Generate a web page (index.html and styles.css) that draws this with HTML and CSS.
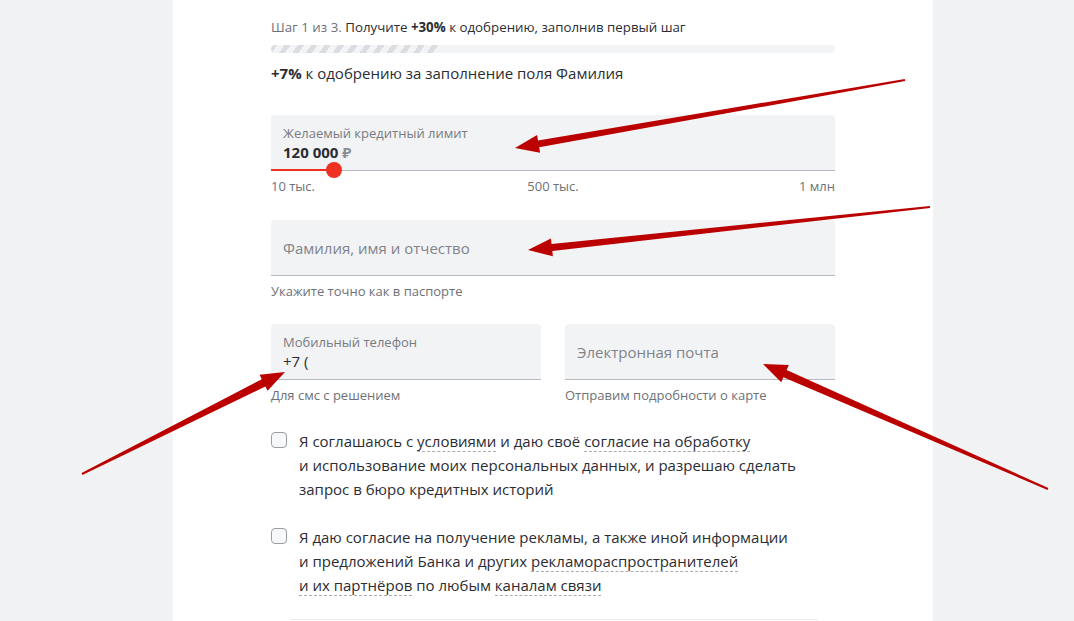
FILE: index.html
```html
<!DOCTYPE html>
<html lang="ru">
<head>
<meta charset="utf-8">
<title>Заявка</title>
<link rel="stylesheet" href="styles.css">
</head>
<body>
<div class="page">
  <main class="panel">
    <p class="step"><span class="muted">Шаг 1 из 3.</span> Получите <b>+30%</b> к одобрению, заполнив первый шаг</p>
    <div class="progress"><div class="progress-fill"></div></div>
    <p class="bonus"><b>+7%</b> к одобрению за заполнение поля Фамилия</p>

    <div class="field field-limit">
      <div class="label">Желаемый кредитный лимит</div>
      <div class="value strong">120 000 <span class="rub">₽</span></div>
      <div class="slider"><div class="slider-fill"></div><div class="thumb"></div></div>
    </div>
    <div class="scale"><span>10 тыс.</span><span class="mid">500 тыс.</span><span class="end">1 млн</span></div>

    <div class="field field-empty field-name">
      <div class="placeholder">Фамилия, имя и отчество</div>
    </div>
    <div class="hint">Укажите точно как в паспорте</div>

    <div class="row">
      <div class="col">
        <div class="field">
          <div class="label">Мобильный телефон</div>
          <div class="value">+7 (</div>
        </div>
        <div class="hint">Для смс с решением</div>
      </div>
      <div class="col">
        <div class="field field-empty">
          <div class="placeholder">Электронная почта</div>
        </div>
        <div class="hint">Отправим подробности о карте</div>
      </div>
    </div>

    <div class="check">
      <span class="box"></span>
      <p>Я соглашаюсь с <span class="link">условиями</span> и даю своё <span class="link">согласие на обработку</span><br>и использование моих персональных данных, и разрешаю сделать<br>запрос в бюро кредитных историй</p>
    </div>
    <div class="check">
      <span class="box"></span>
      <p>Я даю согласие на получение рекламы, а также иной информации<br>и предложений Банка и других <span class="link">рекламораспространителей</span><br><span class="link">и их партнёров</span> по любым <span class="link">каналам связи</span></p>
    </div>
    <div class="divider"></div>
  </main>
</div>

<svg class="arrows" width="1074" height="621" viewBox="0 0 1074 621" aria-hidden="true">
  <g fill="#bb0000">
    <polygon points="904.8,79 538,140.4 537.1,135 515,148 540.1,152.8 539.2,147.3 905.2,81"/>
    <polygon points="929.9,206 551.5,243.9 550.9,238.5 528,250 552.9,256.3 552.3,250.9 930.1,208"/>
    <polygon points="82.4,474.9 265.4,386.4 267.6,390.8 285,372 259.6,374.8 261.8,379.2 81.6,473.1"/>
    <polygon points="1048.4,488.1 786.6,369.9 788.8,364.9 763,364 781.2,382.3 783.4,377.3 1047.6,489.9"/>
  </g>
</svg>
</body>
</html>
```

FILE: styles.css
```css
* { box-sizing: border-box; }
html, body { margin: 0; padding: 0; }
body {
  background: #f1f2f4;
  font-family: "Open Sans", "Noto Sans", "DejaVu Sans", sans-serif;
  color: #2b2d33;
  height: 621px;
  overflow: hidden;
}
.page {
  display: flex;
  padding-left: 173px;
}
.panel {
  width: 760px;
  min-height: 621px;
  background: #ffffff;
  padding: 18px 98px 0 98px;
}
p { margin: 0; }
.step {
  font-size: 13.3px;
  line-height: 18px;
  color: #2b2d33;
}
.step b { font-weight: 700; }
.muted { color: #6e7178; }
.progress {
  margin-top: 9px;
  height: 8px;
  border-radius: 4px;
  background: #f3f4f6;
  overflow: hidden;
}
.progress-fill {
  width: 30%;
  height: 100%;
  border-radius: 4px;
  background: repeating-linear-gradient(-55deg, #f3f4f6 0 6px, #dcdde0 6px 11px);
}
.bonus {
  margin-top: 10px;
  font-size: 15px;
  line-height: 20px;
}
.bonus b { font-weight: 700; }

.field {
  position: relative;
  height: 56px;
  background: #f2f3f5;
  border-radius: 4px 4px 0 0;
  border-bottom: 1px solid #b6b9bf;
  padding: 9px 12px 0 12px;
}
.field-limit { margin-top: 32px; }
.label {
  font-size: 13px;
  line-height: 18px;
  color: #787b82;
}
.value {
  font-size: 15px;
  line-height: 21px;
  color: #2b2d33;
}
.value.strong { font-weight: 700; }
.rub { color: #8a8d93; font-weight: 700; }
.slider {
  position: absolute;
  left: 0;
  right: 0;
  bottom: -1px;
  height: 2px;
}
.slider-fill {
  width: 63px;
  height: 2px;
  background: #ef3124;
}
.thumb {
  position: absolute;
  left: 55px;
  top: -7px;
  width: 16px;
  height: 16px;
  border-radius: 50%;
  background: #ef3124;
}
.scale {
  display: grid;
  grid-template-columns: 1fr 1fr 1fr;
  font-size: 13px;
  line-height: 18px;
  color: #6e7178;
  margin-top: 6px;
}
.scale .mid { text-align: center; }
.scale .end { text-align: right; }

.field-empty {
  display: flex;
  align-items: center;
  padding-top: 0;
}
.field-name { margin-top: 25px; }
.placeholder {
  font-size: 15px;
  color: #80838a;
}
.hint {
  margin-top: 6px;
  font-size: 13px;
  line-height: 18px;
  color: #6e7178;
}
.row {
  display: flex;
  gap: 24px;
  margin-top: 24px;
}
.col { flex: 1; }

.check {
  display: flex;
  gap: 12px;
  margin-top: 25px;
}
.check + .check { margin-top: 24px; }
.box {
  flex: none;
  width: 16px;
  height: 16px;
  margin-top: 3px;
  border: 1px solid #9b9ea5;
  border-radius: 4px;
  background: #f7f8f9;
}
.check p {
  font-size: 15px;
  line-height: 24px;
  color: #2b2d33;
}
.link {
  border-bottom: 1px dashed #a9acb2;
}
.divider {
  margin: 22px 17px 0 19px;
  height: 1px;
  background: #ebecee;
}
.arrows {
  position: absolute;
  left: 0;
  top: 0;
  pointer-events: none;
}
```
